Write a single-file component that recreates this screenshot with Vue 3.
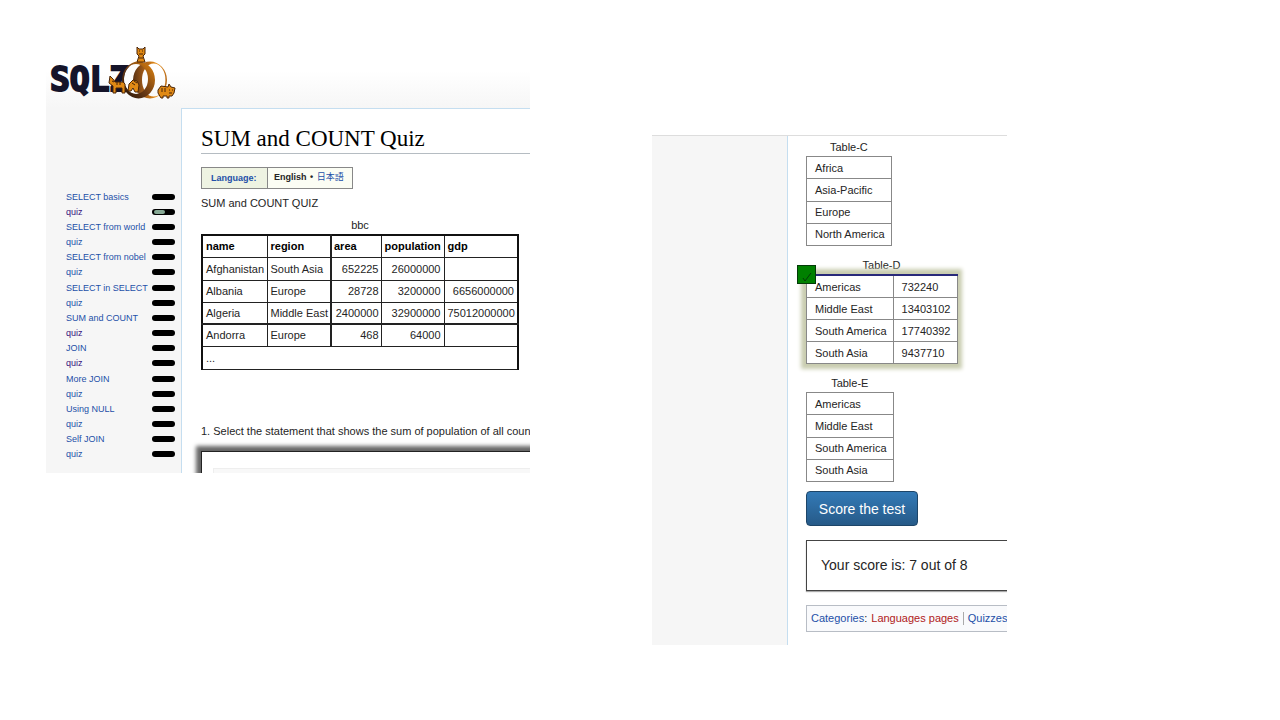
<script setup>
const lessons = [
  { label: 'SELECT basics' },
  { label: 'quiz', visited: true, progress: 60 },
  { label: 'SELECT from world' },
  { label: 'quiz' },
  { label: 'SELECT from nobel' },
  { label: 'quiz' },
  { label: 'SELECT in SELECT' },
  { label: 'quiz' },
  { label: 'SUM and COUNT' },
  { label: 'quiz', visited: true },
  { label: 'JOIN' },
  { label: 'quiz', visited: true },
  { label: 'More JOIN' },
  { label: 'quiz' },
  { label: 'Using NULL' },
  { label: 'quiz' },
  { label: 'Self JOIN' },
  { label: 'quiz' }
]
const countries = [
  ['Afghanistan', 'South Asia', '652225', '26000000', ''],
  ['Albania', 'Europe', '28728', '3200000', '6656000000'],
  ['Algeria', 'Middle East', '2400000', '32900000', '75012000000'],
  ['Andorra', 'Europe', '468', '64000', '']
]
const tableC = ['Africa', 'Asia-Pacific', 'Europe', 'North America']
const tableD = [
  ['Americas', '732240'],
  ['Middle East', '13403102'],
  ['South America', '17740392'],
  ['South Asia', '9437710']
]
const tableE = ['Americas', 'Middle East', 'South America', 'South Asia']
</script>

<template>
  <main class="page">
    <section class="panel start">
      <header class="masthead">
        <a href="#" class="logo" aria-label="SQLZOO">
          <svg width="130" height="56" viewBox="0 0 130 56">
            <defs>
              <linearGradient id="ringA" x1="0" y1="1" x2="1" y2="0">
                <stop offset="0" stop-color="#1d1008" />
                <stop offset=".45" stop-color="#6b3a14" />
                <stop offset="1" stop-color="#e8890f" />
              </linearGradient>
              <linearGradient id="ringB" x1="0" x2="1">
                <stop offset="0" stop-color="#5a3214" />
                <stop offset=".35" stop-color="#a8601a" />
                <stop offset=".7" stop-color="#ec9116" />
                <stop offset="1" stop-color="#b86c1c" />
              </linearGradient>
            </defs>
            <text class="mark" x="0" y="46">SQLZ</text>
            <ellipse cx="86" cy="34" rx="12" ry="15" fill="#fdfdfd" />
            <path fill="url(#ringB)" fill-rule="evenodd" d="M83 35a17 18.5 0 1 0 34 0a17 18.5 0 1 0-34 0zM92 35a11.7 16.5 0 1 0 23.4 0a11.7 16.5 0 1 0-23.4 0z" />
            <path fill="url(#ringA)" fill-rule="evenodd" d="M72 35a16.5 18.5 0 1 0 33 0a16.5 18.5 0 1 0-33 0zM74 34a12 15 0 1 0 24 0a12 15 0 1 0-24 0z" />
            <g fill="#e08914" stroke="#4a2508" stroke-width="1" stroke-linejoin="round">
              <path d="M87 2l2 2h4l2-2v7l-2 2 2 6h-8l2-6-2-2z" />
              <path d="M60 31l3 3 2 3h8l2 2v9h-3v-5h-6v5h-3v-7l-4-3z" />
              <path d="M78 46l1-7 4-4 4 1 2 4-1 7h-3l-2-4-2 3z" />
              <path d="M108 45l3-4 7 1 1-3 2 3 4 1-1 5-2 3h-3v2h-2v-2h-4v2h-2l-3-5z" />
            </g>
            <path stroke="#4a2508" stroke-width="1" fill="none" d="M89 6h1M92 6h1M89 9h4M89 13h4M67 37v3M70 37v3M62 36l2 1M82 38l3 2M84 36l3 2M112 43v4M115 43v4M119 45h1M122 45h1M119 48h3" />
          </svg>
        </a>
      </header>
      <div class="columns">
        <nav class="side">
          <ul>
            <li v-for="(l, i) in lessons" :key="i">
              <a href="#" :class="{ visited: l.visited }">{{ l.label }}</a>
              <span class="pill"><span v-if="l.progress" class="fill" :style="{ width: l.progress + '%' }"></span></span>
            </li>
          </ul>
        </nav>
        <article class="content quiz">
          <h1>SUM and COUNT Quiz</h1>
          <div class="language">
            <a href="#" class="lang-name">Language:</a>
            <div class="lang-list"><b>English</b> <b class="dot">•</b> <a href="#">日本語</a></div>
          </div>
          <p class="intro">SUM and COUNT QUIZ</p>
          <table class="bbc">
            <caption>bbc</caption>
            <colgroup><col class="c1"><col class="c2"><col class="c3"><col class="c4"><col class="c5"></colgroup>
            <thead>
              <tr><th>name</th><th>region</th><th>area</th><th>population</th><th>gdp</th></tr>
            </thead>
            <tbody>
              <tr v-for="(row, r) in countries" :key="r">
                <td v-for="(cell, c) in row" :key="c" :class="{ num: c > 1 }">{{ cell }}</td>
              </tr>
              <tr><td colspan="5">...</td></tr>
            </tbody>
          </table>
          <p class="question">1. Select the statement that shows the sum of population of all countries</p>
          <div class="answer"><div class="code"></div></div>
        </article>
      </div>
    </section>

    <section class="panel result">
      <div class="side"></div>
      <div class="content">
        <table class="opt c">
          <caption>Table-C</caption>
          <tbody><tr v-for="t in tableC" :key="t"><td>{{ t }}</td></tr></tbody>
        </table>
        <div class="chosen">
          <p class="opt-title">Table-D</p>
          <div class="picked">
            <table class="opt d" aria-label="Table-D">
              <tbody><tr v-for="t in tableD" :key="t[0]"><td>{{ t[0] }}</td><td>{{ t[1] }}</td></tr></tbody>
            </table>
            <span class="tick">
              <svg width="10" height="10" viewBox="0 0 10 10"><path d="M1 6l2 3L9 1" fill="none" stroke="#043c08" /></svg>
            </span>
          </div>
        </div>
        <table class="opt e">
          <caption>Table-E</caption>
          <tbody><tr v-for="t in tableE" :key="t"><td>{{ t }}</td></tr></tbody>
        </table>
        <button type="button" class="score">Score the test</button>
        <div class="total">Your score is: 7 out of 8</div>
        <div class="cats"><a href="#">Categories</a>:<a href="#" class="missing">Languages pages</a><a href="#" class="next">Quizzes</a></div>
      </div>
    </section>
  </main>
</template>

<style>
body { background: #fff; }
</style>

<style scoped>
* { box-sizing: border-box; }
.page {
  display: grid;
  grid-template-columns: 46fr 484fr 122fr 355fr 273fr;
  align-items: start;
  padding-top: 45px;
  font: 11px/16px "Liberation Sans", "Noto Sans CJK JP", sans-serif;
  color: #252525;
}
a { color: #2450a8; text-decoration: none; }
p, h1, ul { margin: 0; padding: 0; }
.panel { min-width: 0; overflow: hidden; }
.start { grid-column: 2; }
.result { grid-column: 4; display: flex; margin-top: 90px; border-top: 1px solid #ddd; }
.masthead { height: 63px; background: linear-gradient(#fff 40%, #f6f6f6); }
.logo { display: block; width: 130px; margin-left: 4px; }
.logo svg { display: block; }
.mark { font: bold 33px "DejaVu Sans Mono", monospace; fill: #15142a; stroke: #15142a; stroke-width: 2px; }
.columns { display: flex; }
.side { flex: none; width: 135px; background: #f6f6f6; }
.content { flex: 1; min-width: 0; border-left: 1px solid #c5def0; padding-left: 18px; background: #fff; }
.quiz { border-top: 1px solid #c5def0; padding-top: 16px; padding-left: 19px; }
.start .side { padding: 81px 6px 0 20px; }
.side ul { list-style: none; height: 273px; display: flex; flex-direction: column; justify-content: space-between; }
.side li { display: flex; justify-content: space-between; align-items: center; height: 15px; font-size: 9px; line-height: 16px; white-space: nowrap; }
.side a.visited { color: #36107c; }
.pill { display: block; flex: none; width: 23px; height: 6px; border-radius: 3px; background: #000; padding: 1px 2px; }
.fill { display: block; height: 4px; border-radius: 2px; background: #86a894; }
h1 { font: 23px/28px "Liberation Serif", serif; color: #000; border-bottom: 1px solid #b5bcc2; }
.language { display: flex; width: 152px; height: 22px; margin-top: 13px; border: 1px solid #888; background: #fbfdf4; font-size: 9px; line-height: 20px; }
.lang-name { width: 66px; padding-left: 9px; border-right: 1px solid #888; background: #eef3e2; font-weight: bold; }
.lang-list { padding-left: 6px; white-space: nowrap; line-height: 19px; }
.dot { margin: 0 1px; }
.intro { margin-top: 6px; }
table { border-collapse: collapse; }
.bbc { table-layout: fixed; width: 316px; margin-top: 6px; border: 2px solid #111; border-bottom-width: 1px; }
.bbc caption { line-height: 16px; padding-bottom: 1px; }
.bbc th, .bbc td { height: 22px; border: 1px solid #222; padding: 0 3px; text-align: left; white-space: nowrap; }
.bbc th { color: #000; }
.bbc tr:first-child td, .bbc tr:last-child td { height: 23px; }
.bbc .num { text-align: right; }
.bbc th:nth-child(3), .bbc td:nth-child(3) { border-left-width: 2px; }
.bbc th:nth-child(3), .bbc td.num:nth-child(3) { padding: 0 2px; }
.bbc tbody tr:nth-child(4) td { border-top-width: 2px; }
.c1 { width: 65px; } .c2 { width: 64px; } .c3 { width: 50px; } .c4 { width: 63px; } .c5 { width: 74px; }
.question { margin-top: 53px; white-space: nowrap; }
.answer { height: 22px; margin-top: 12px; border: solid #222; border-width: 1px 0 0 1px; box-shadow: 0 0 4px 5px #666; padding: 16px 0 0 11px; }
.code { height: 5px; background: #f8f8f8; border: solid #eee; border-width: 1px 0 0 1px; }
.result .content { padding-top: 3px; padding-bottom: 13px; }
.opt { height: 90px; border: 1px solid #777; white-space: nowrap; }
.opt caption, .opt-title { text-align: center; line-height: 17px; }
.opt td { border: 1px solid #888; padding: 0 6px 0 8px; }
.c { width: 85px; }
.chosen { width: 151px; margin-top: 11px; }
.picked { position: relative; box-shadow: 0 0 4px 5px #c9cdb0; }
.d { width: 151px; height: 90px; border-top: 2px solid #29297a; background: #fff; }
.d td:first-child { width: 86px; }
.tick { position: absolute; left: -9px; top: -9px; width: 19px; height: 19px; background: #008000; border: 1px solid #033b08; display: flex; align-items: flex-end; justify-content: center; padding-bottom: 1px; }
.e { width: 87px; margin-top: 11px; }
.score { display: block; width: 112px; height: 35px; margin-top: 9px; border: 1px solid #1d4568; border-radius: 4px; background: linear-gradient(#337ab7, #265a88); color: #fff; font: 14px/20px "Liberation Sans", sans-serif; padding: 0; }
.total { height: 51px; margin-top: 14px; border: 1px solid #444; border-right: 0; padding-left: 14px; font-size: 14px; line-height: 48px; box-shadow: 0 1px 1px #aaa; }
.cats { height: 27px; margin-top: 14px; border: 1px solid #b8bdc5; border-right: 0; background: #f9fafc; padding-left: 4px; line-height: 25px; white-space: nowrap; display: flex; align-items: center; }
.cats .missing { color: #b02020; margin-left: 4px; }
.cats .next { border-left: 1px solid #aaa; margin-left: 4px; padding-left: 4px; line-height: 13px; }
</style>
